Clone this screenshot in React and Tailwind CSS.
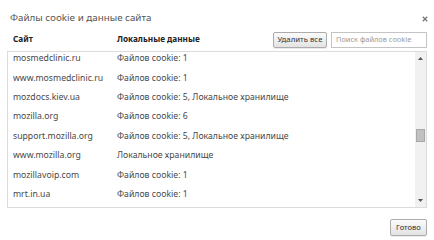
const rows = [
  ['mosmedclinic.ru', 'Файлов cookie: 1'],
  ['www.mosmedclinic.ru', 'Файлов cookie: 1'],
  ['mozdocs.kiev.ua', 'Файлов cookie: 5, Локальное хранилище'],
  ['mozilla.org', 'Файлов cookie: 6'],
  ['support.mozilla.org', 'Файлов cookie: 5, Локальное хранилище'],
  ['www.mozilla.org', 'Локальное хранилище'],
  ['mozillavoip.com', 'Файлов cookie: 1'],
  ['mrt.in.ua', 'Файлов cookie: 1'],
];

const btn =
  'border border-[#acacac] rounded-[2px] bg-gradient-to-b from-[#fbfbfb] to-[#e3e3e3] text-[#333] leading-none shadow-[0_1px_0_rgba(0,0,0,0.08)]';

const App = () => {
  return (
    <div className="w-[434px] h-[240px] bg-white relative overflow-hidden font-['Noto_Sans',sans-serif]">
      {/* Title */}
      <div className="flex items-center justify-between pl-[10px] pr-[6px] pt-[6px] h-[30px]">
        <span className="text-[9.8px] text-[#555]">Файлы cookie и данные сайта</span>
        <svg width="6" height="6" viewBox="0 0 6 6" className="mt-[2px]">
          <path d="M0.8 0.8 L5.2 5.2 M5.2 0.8 L0.8 5.2" stroke="#777" strokeWidth="1.3" />
        </svg>
      </div>

      {/* Header row */}
      <div className="flex items-center h-[17px] mt-[1px] pl-[13px] pr-[7px]">
        <span className="w-[104px] text-[8.2px] font-bold text-[#222]">Сайт</span>
        <span className="text-[8.2px] font-bold text-[#222]">Локальные данные</span>
        <div className="ml-auto flex items-center gap-[4px]">
          <button className={`${btn} h-[16px] w-[54px] text-[7.8px]`}>Удалить все</button>
          <div className="w-[96px] h-[16px] border border-[#c4c4c4] bg-white flex items-center px-[4px] text-[7.4px] text-[#9a9a9a]">
            Поиск файлов cookie
          </div>
        </div>
      </div>

      {/* List */}
      <div className="mx-[7px] mt-[3px] h-[157px] border border-[#dcdcdc] flex overflow-hidden">
        <div className="flex-1 overflow-hidden">
          <div className="-mt-[3px]">
            {rows.map(([site, data]) => (
              <div key={site} className="h-[19.4px] flex items-center pl-[5px] text-[8.7px] text-[#484848]">
                <span className="w-[104px] truncate">{site}</span>
                <span>{data}</span>
              </div>
            ))}
          </div>
        </div>
        <div className="w-[11px] bg-[#f1f1f1] flex flex-col items-center">
          <svg width="5" height="3" viewBox="0 0 5 3" className="mt-[5px]">
            <path d="M0 3 L2.5 0 L5 3 Z" fill="#555" />
          </svg>
          <div className="mt-[69px] w-[9px] h-[13px] bg-[#c1c1c1] border border-[#a8a8a8]" />
          <svg width="5" height="3" viewBox="0 0 5 3" className="mt-auto mb-[5px]">
            <path d="M0 0 L5 0 L2.5 3 Z" fill="#555" />
          </svg>
        </div>
      </div>

      {/* Footer */}
      <div className="flex justify-end pr-[7px] mt-[11px]">
        <button className={`${btn} h-[17px] w-[37px] text-[7.6px]`}>Готово</button>
      </div>
    </div>
  );
};

export default App;
